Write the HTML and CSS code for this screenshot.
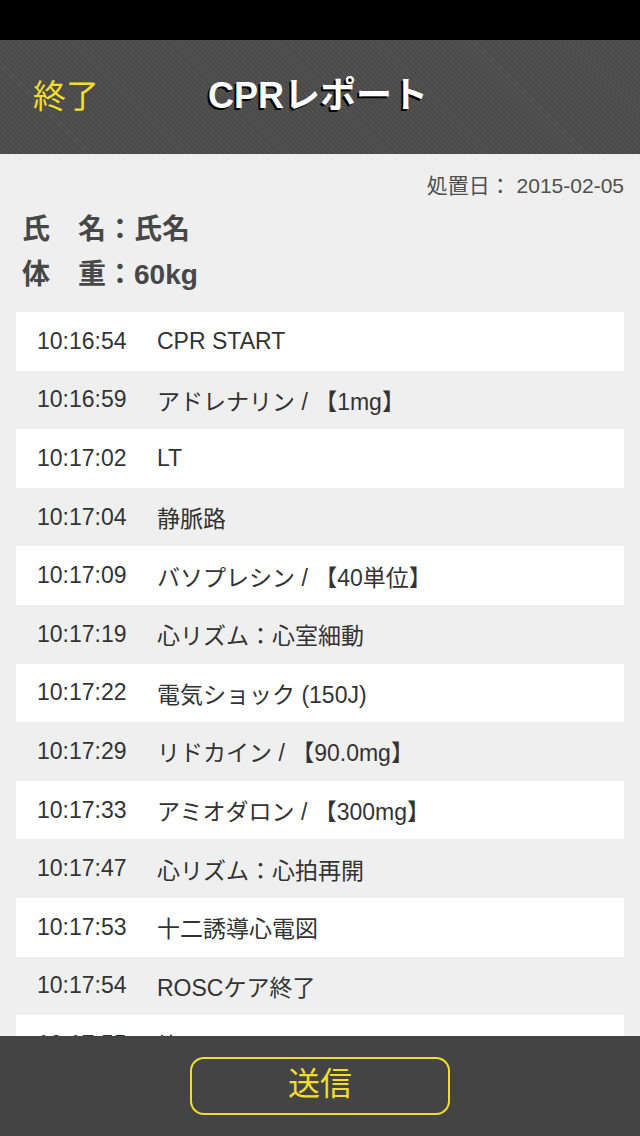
FILE: index.html
```html
<!DOCTYPE html>
<html lang="ja">
<head>
<meta charset="utf-8">
<title>CPRレポート</title>
<link rel="stylesheet" href="styles.css">
</head>
<body>
<div class="app">
  <div class="statusbar"></div>
  <header class="navbar">
    <span class="nav-left">終了</span>
    <h1 class="nav-title">CPRレポート</h1>
    <span class="nav-right"></span>
  </header>
  <main class="content">
    <div class="date">処置日： 2015-02-05</div>
    <div class="patient">
      <div class="pline">氏　名：氏名</div>
      <div class="pline">体　重：60kg</div>
    </div>
    <ul class="log">
      <li class="row"><span class="time">10:16:54</span><span class="desc">CPR START</span></li>
      <li class="row"><span class="time">10:16:59</span><span class="desc">アドレナリン / 【1mg】</span></li>
      <li class="row"><span class="time">10:17:02</span><span class="desc">LT</span></li>
      <li class="row"><span class="time">10:17:04</span><span class="desc">静脈路</span></li>
      <li class="row"><span class="time">10:17:09</span><span class="desc">バソプレシン / 【40単位】</span></li>
      <li class="row"><span class="time">10:17:19</span><span class="desc">心リズム：心室細動</span></li>
      <li class="row"><span class="time">10:17:22</span><span class="desc">電気ショック (150J)</span></li>
      <li class="row"><span class="time">10:17:29</span><span class="desc">リドカイン / 【90.0mg】</span></li>
      <li class="row"><span class="time">10:17:33</span><span class="desc">アミオダロン / 【300mg】</span></li>
      <li class="row"><span class="time">10:17:47</span><span class="desc">心リズム：心拍再開</span></li>
      <li class="row"><span class="time">10:17:53</span><span class="desc">十二誘導心電図</span></li>
      <li class="row"><span class="time">10:17:54</span><span class="desc">ROSCケア終了</span></li>
      <li class="row"><span class="time">10:17:55</span><span class="desc">終了</span></li>
    </ul>
  </main>
  <footer class="footer">
    <button class="send">送信</button>
  </footer>
</div>
</body>
</html>
```

FILE: styles.css
```css
* { box-sizing: border-box; }
html, body { margin: 0; padding: 0; }
body {
  font-family: "Liberation Sans", "Noto Sans CJK JP", sans-serif;
  background: #efefef;
}
.app {
  width: 640px;
  height: 1136px;
  display: flex;
  flex-direction: column;
  overflow: hidden;
}
.statusbar {
  height: 40px;
  background: #000;
  flex: none;
}
.navbar {
  height: 114px;
  flex: none;
  display: flex;
  align-items: center;
  background-color: #4b4b4b;
  background-image: repeating-linear-gradient(45deg, #4a4a4a 0px, #4a4a4a 2px, #525252 2px, #525252 3.5px);
  padding: 0 0 0 33px;
}
.nav-left {
  width: 140px;
  color: #f2de2a;
  font-size: 33px;
  line-height: 1;
  margin-top: -2px;
}
.nav-title {
  margin: 0;
  margin-top: -2px;
  width: 290px;
  text-align: center;
  color: #fff;
  font-size: 36px;
  font-weight: bold;
  line-height: 1;
  text-shadow: -2px 2px 0 #000;
}
.nav-right { flex: 1; }
.content {
  flex: 1;
  overflow: hidden;
  padding-top: 20px;
}
.date {
  text-align: right;
  padding-right: 16px;
  font-size: 21px;
  line-height: 24px;
  color: #505050;
}
.patient {
  margin-top: 9px;
  padding-left: 22px;
}
.pline {
  font-size: 28px;
  line-height: 45px;
  font-weight: bold;
  color: #474747;
}
.log {
  list-style: none;
  margin: 15px 16px 0;
  padding: 0;
}
.row {
  height: 58.6px;
  display: flex;
  align-items: center;
  padding-left: 21px;
  font-size: 23px;
  color: #333;
}
.row:nth-child(odd) { background: #fff; }
.time { width: 120px; flex: none; }
.footer {
  height: 100px;
  flex: none;
  background: #444;
  display: flex;
  justify-content: center;
  align-items: center;
}
.send {
  width: 260px;
  height: 58px;
  margin-top: -1px;
  background: transparent;
  border: 2px solid #f2de2a;
  border-radius: 14px;
  color: #f2de2a;
  font-family: "Liberation Sans", "Noto Sans CJK JP", sans-serif;
  font-size: 32px;
  line-height: 1;
  padding: 0 0 4px;
}
```
